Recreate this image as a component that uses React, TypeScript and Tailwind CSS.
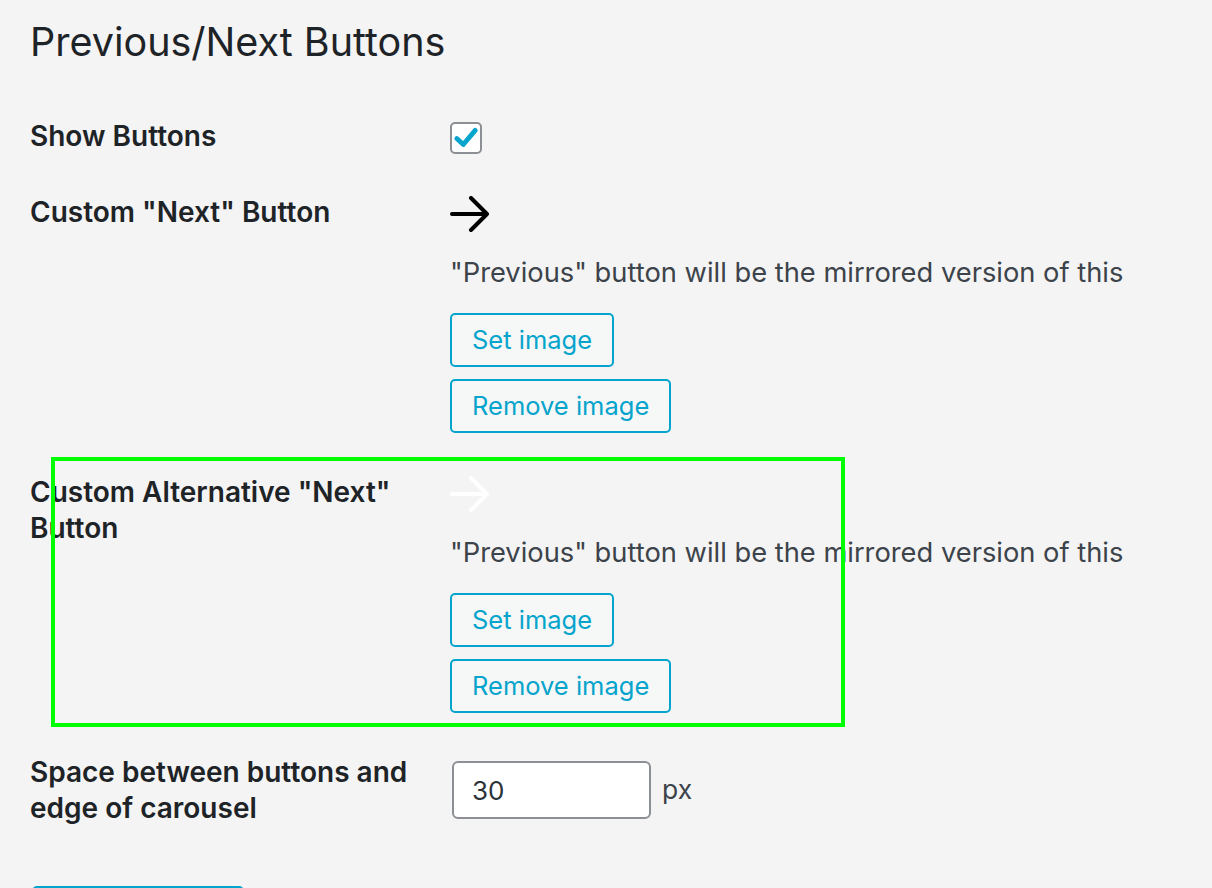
import React from "react";

const Arrow = ({ color }: { color: string }) => (
  <svg width="40" height="38" viewBox="0 0 40 38" fill="none">
    <path
      d="M2 19H37M21 3L37 19L21 35"
      stroke={color}
      strokeWidth="4"
      strokeLinecap="round"
      strokeLinejoin="round"
    />
  </svg>
);

const ImagePicker = ({ arrow }: { arrow: string }) => (
  <div className="flex flex-col items-start pb-px">
    <div className="mt-px h-[38px] blur-[0.4px]">
      <Arrow color={arrow} />
    </div>
    <p className="mt-[22px] text-[27.3px] leading-[36px] text-[#3c434a]">
      "Previous" button will be the mirrored version of this
    </p>
    <button className="mt-[22px] h-[54px] rounded-[5px] border-2 border-[#04a4cc] bg-[#f6f7f7] px-[20px] text-[25.5px] text-[#04a4cc]">
      Set image
    </button>
    <button className="mt-[12px] h-[54px] rounded-[5px] border-2 border-[#04a4cc] bg-[#f6f7f7] px-[20px] text-[25.5px] text-[#04a4cc]">
      Remove image
    </button>
  </div>
);

const Row = ({ label, children }: { label: string; children: React.ReactNode }) => (
  <div className="flex py-[20px]">
    <div className="w-[420px] shrink-0 pr-[20px] text-[28px] font-semibold leading-[36px] text-[#1d2327]">
      {label}
    </div>
    <div>{children}</div>
  </div>
);

export default function App() {
  return (
    <div className="relative min-h-screen bg-[#f4f4f4] pl-[30px] font-['Inter',sans-serif] text-[#1d2327]">
      <h2 className="pt-[16px] text-[39.5px] font-normal leading-[52px] text-[#1d2327]">
        Previous/Next Buttons
      </h2>

      <div className="mt-[30px]">
        <Row label="Show Buttons">
          <div className="mt-[4px] flex h-[32px] w-[32px] items-center justify-center rounded-[5px] border-2 border-[#8c8f94] bg-white">
            <svg width="26" height="26" viewBox="0 0 24 24">
              <path
                d="M3.5 12.5L9.5 18L20.5 5"
                stroke="#04a4cc"
                strokeWidth="4.5"
                fill="none"
                strokeLinecap="round"
                strokeLinejoin="round"
              />
            </svg>
          </div>
        </Row>

        <Row label={'Custom "Next" Button'}>
          <ImagePicker arrow="#000000" />
        </Row>

        <Row label={'Custom Alternative "Next" Button'}>
          <ImagePicker arrow="#ffffff" />
        </Row>

        <Row label="Space between buttons and edge of carousel">
          <div className="mt-[7px] flex items-center">
            <input
              defaultValue="30"
              className="ml-[2px] h-[58px] w-[199px] rounded-[6px] border-2 border-[#8c8f94] bg-white px-[18px] text-[26px] text-[#2c3338] outline-none"
            />
            <span className="ml-[11px] text-[26.5px] text-[#3c434a]">px</span>
          </div>
        </Row>
      </div>

      <button className="mt-[40px] ml-[2px] h-[54px] w-[212px] rounded-[5px] bg-[#04a4cc] text-[25.5px] text-white">
        Save Changes
      </button>

      <div className="absolute left-[51px] top-[457px] h-[270px] w-[794px] border-[4px] border-[#00ff00]" />
    </div>
  );
}
